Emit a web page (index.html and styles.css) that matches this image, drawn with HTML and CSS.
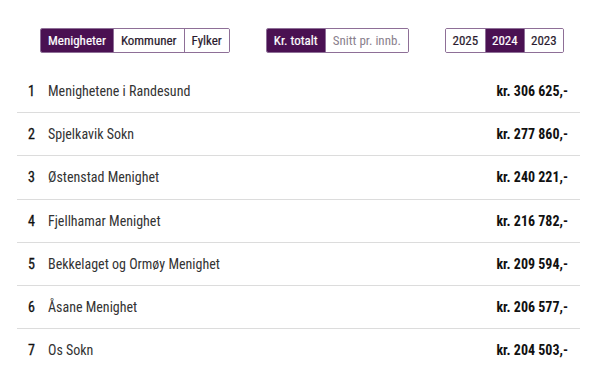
FILE: index.html
```html
<!DOCTYPE html>
<html lang="no">
<head>
<meta charset="utf-8">
<link rel="stylesheet" href="styles.css">
</head>
<body>
<div class="toolbar">
  <div class="group">
    <span class="btn active">Menigheter</span>
    <span class="btn">Kommuner</span>
    <span class="btn">Fylker</span>
  </div>
  <div class="group">
    <span class="btn active">Kr. totalt</span>
    <span class="btn muted">Snitt pr. innb.</span>
  </div>
  <div class="group">
    <span class="btn year">2025</span>
    <span class="btn year active">2024</span>
    <span class="btn year">2023</span>
  </div>
</div>
<ol class="list">
  <li class="row"><span class="rank">1</span><span class="name">Menighetene i Randesund</span><span class="amount">kr. 306 625,-</span></li>
  <li class="row"><span class="rank">2</span><span class="name">Spjelkavik Sokn</span><span class="amount">kr. 277 860,-</span></li>
  <li class="row"><span class="rank">3</span><span class="name">Østenstad Menighet</span><span class="amount">kr. 240 221,-</span></li>
  <li class="row"><span class="rank">4</span><span class="name">Fjellhamar Menighet</span><span class="amount">kr. 216 782,-</span></li>
  <li class="row"><span class="rank">5</span><span class="name">Bekkelaget og Ormøy Menighet</span><span class="amount">kr. 209 594,-</span></li>
  <li class="row"><span class="rank">6</span><span class="name">Åsane Menighet</span><span class="amount">kr. 206 577,-</span></li>
  <li class="row"><span class="rank">7</span><span class="name">Os Sokn</span><span class="amount">kr. 204 503,-</span></li>
</ol>
</body>
</html>
```
FILE: styles.css
```css
* { box-sizing: border-box; }
html, body { margin: 0; padding: 0; background: #fff; }
body {
  font-family: "Roboto Condensed", Roboto, "Liberation Sans", sans-serif;
  color: #222;
  width: 600px;
  height: 367px;
  overflow: hidden;
}
.toolbar {
  display: flex;
  gap: 36px;
  padding: 28px 0 0 40px;
}
.group {
  display: flex;
  border: 1px solid #8e6f97;
  border-radius: 2px;
  height: 25px;
  overflow: hidden;
}
.btn {
  display: flex;
  align-items: center;
  justify-content: center;
  padding: 0 7px;
  font-size: 13px;
  color: #2a1a2e;
  border-left: 1px solid #8e6f97;
  background: #fff;
  -webkit-text-stroke: 0.2px currentColor;
}
.btn:first-child { border-left: none; }
.btn.year { width: 39px; padding: 0; }
.btn.year:first-child { width: 39px; }
.btn.active {
  background: #4a1152;
  color: #fff;
}
.btn.muted { color: #8a7f8d; -webkit-text-stroke: 0; }
.list {
  list-style: none;
  margin: 17px 0 0 17px;
  padding: 0;
  width: 563px;
}
.row {
  display: flex;
  align-items: center;
  height: 43.2px;
  border-bottom: 1px solid #dcdcdc;
  font-size: 14px;
}
.rank {
  width: 31px;
  padding-left: 11px;
  color: #111;
  -webkit-text-stroke: 0.3px currentColor;
}
.name {
  flex: 1;
  color: #333;
}
.amount {
  font-weight: 700;
  color: #111;
  padding-right: 12px;
}
```
